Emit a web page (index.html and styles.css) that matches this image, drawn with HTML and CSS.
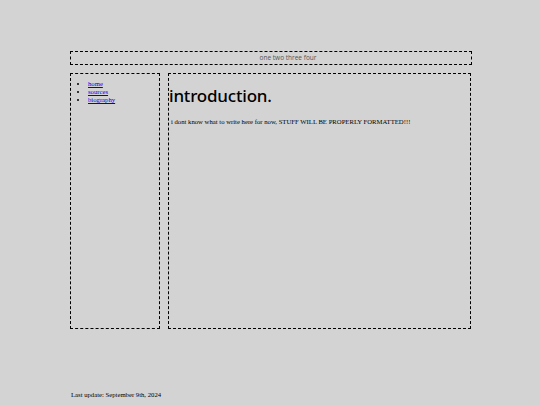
FILE: index.html
```html
<!DOCTYPE html>
<html>
<head>
<meta charset="utf-8">
<link rel="stylesheet" href="styles.css">
</head>
<body>
<div class="wrap">
  <div class="header">one two three four</div>
  <div class="row">
    <div class="sidebar">
      <ul class="nav">
        <li><a href="#">home</a></li>
        <li><a href="#">sources</a></li>
        <li><a href="#">biography</a></li>
      </ul>
    </div>
    <div class="main">
      <h1 class="title">introduction.</h1>
      <p class="text">i dont know what to write here for now, STUFF WILL BE PROPERLY FORMATTED!!!</p>
    </div>
  </div>
  <div class="footer">Last update: September 9th, 2024</div>
</div>
</body>
</html>
```
FILE: styles.css
```css
html, body {
  margin: 0;
  padding: 0;
  background: #d3d3d3;
}
.wrap {
  width: 402px;
  margin: 51px auto 0 70px;
}
.header {
  border: 1px dashed #000;
  height: 12px;
  line-height: 12px;
  text-align: center;
  padding-left: 34px;
  font-family: "Open Sans", sans-serif;
  font-size: 6.5px;
  color: #555;
}
.row {
  display: flex;
  gap: 8px;
  margin-top: 8px;
  height: 256px;
}
.sidebar {
  width: 88px;
  border: 1px dashed #000;
}
.main {
  width: 301px;
  border: 1px dashed #000;
}
.nav {
  margin: 6px 0 0 0;
  padding-left: 17px;
  font-family: "Liberation Serif", serif;
  font-size: 6.7px;
  line-height: 8px;
}
.nav a {
  color: #0000ee;
}
.title {
  margin: 12px 0 0 0;
  font-family: "Noto Sans", sans-serif;
  font-weight: 500;
  font-size: 17px;
  line-height: 20px;
  letter-spacing: -0.2px;
}
.text {
  margin: 12px 0 0 2px;
  font-family: "Liberation Serif", serif;
  font-size: 6.7px;
  line-height: 8px;
}
.footer {
  margin-top: 62px;
  padding-left: 1px;
  font-family: "Liberation Serif", serif;
  font-size: 6.7px;
  line-height: 8px;
}
```
